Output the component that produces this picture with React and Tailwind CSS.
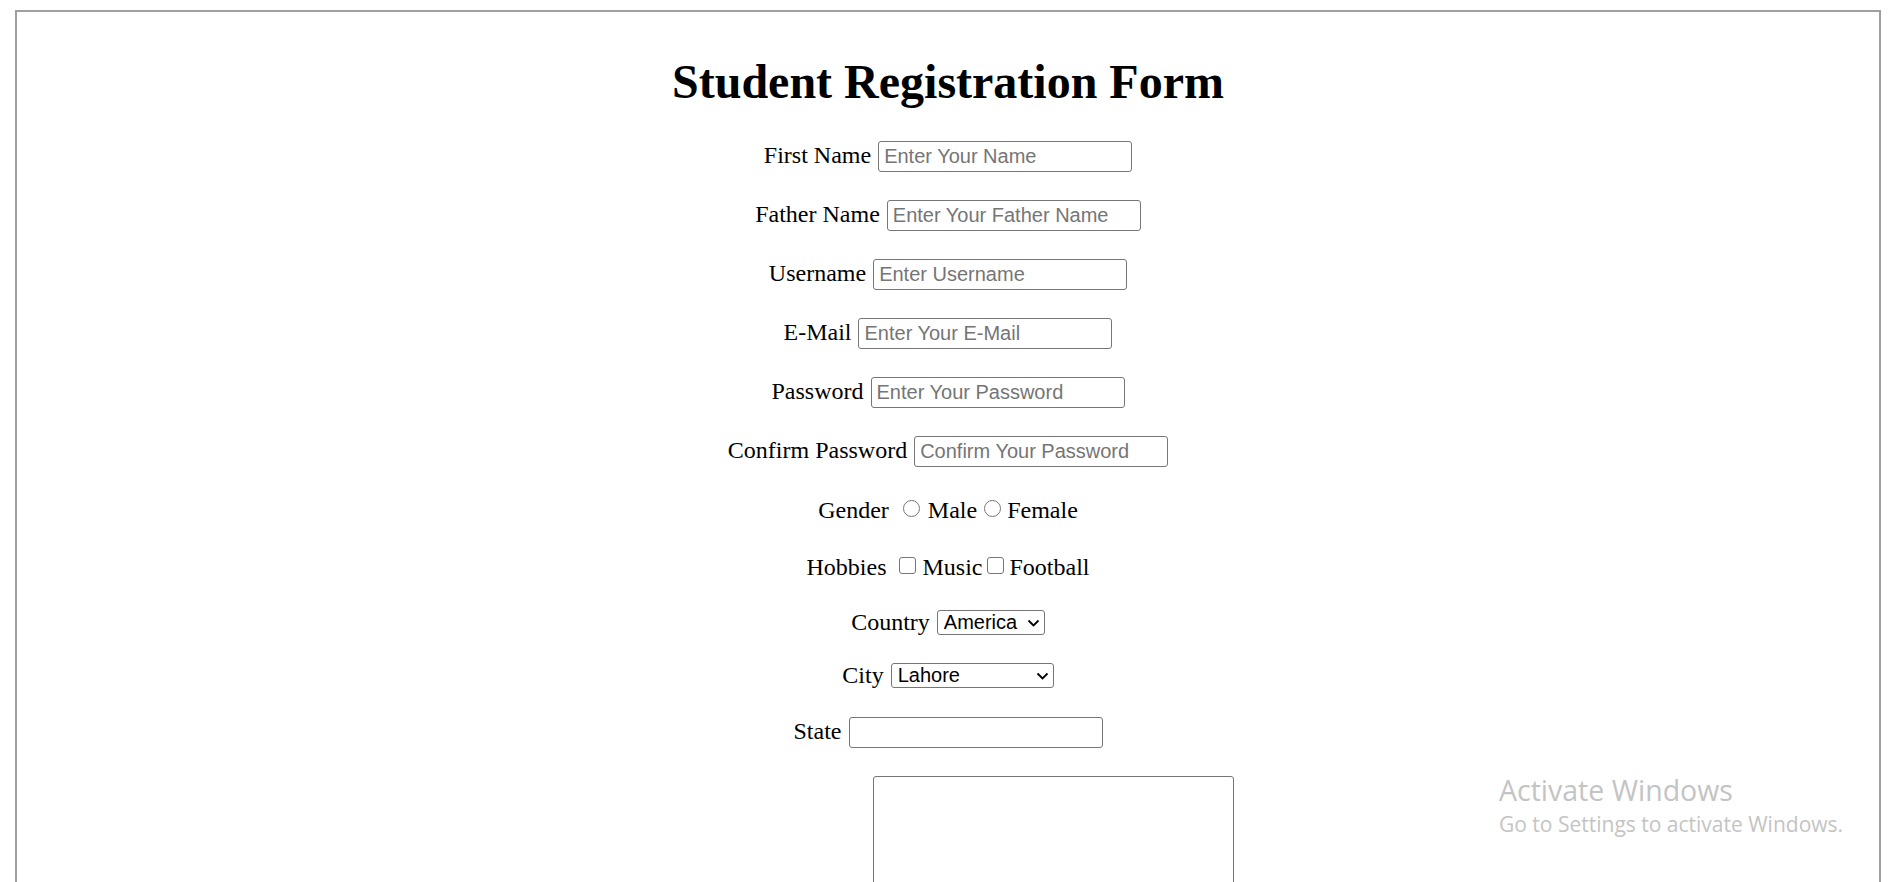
const serif = "font-['Liberation_Serif','Times_New_Roman',serif]";
const sans = "font-['Liberation_Sans',Arial,sans-serif]";

function Label({ children, className = "" }) {
  return (
    <span className={`${serif} text-[24px] leading-[28px] text-black whitespace-nowrap ${className}`}>
      {children}
    </span>
  );
}

function TextRow({ label, placeholder, type = "text", className = "" }) {
  return (
    <div className={`flex items-start justify-center gap-[7px] ${className}`}>
      <Label>{label}</Label>
      <input
        type={type}
        placeholder={placeholder}
        className={`${sans} w-[254px] h-[31px] px-[5px] py-0 text-[20px] text-black bg-white border border-[#767676] rounded-[3px] outline-none placeholder:text-[#757575]`}
      />
    </div>
  );
}

function Chevron() {
  return (
    <svg
      width="13"
      height="8"
      viewBox="0 0 13 8"
      className="absolute right-[5px] top-[9px] pointer-events-none"
    >
      <path d="M1.5 1.5 L6.5 6.5 L11.5 1.5" fill="none" stroke="#000" strokeWidth="1.8" />
    </svg>
  );
}

function SelectBox({ options, width }) {
  return (
    <div className={`relative mt-[2px] ${width}`}>
      <select
        className={`${sans} appearance-none w-full h-[25px] pl-[6px] pr-[20px] py-0 text-[20px] leading-[23px] text-black bg-white border border-[#767676] rounded-[3px] outline-none`}
      >
        {options.map((o) => (
          <option key={o}>{o}</option>
        ))}
      </select>
      <Chevron />
    </div>
  );
}

const radioCls =
  "appearance-none shrink-0 w-[17px] h-[17px] mt-[4px] rounded-full border border-[#767676] bg-white";
const checkCls =
  "appearance-none shrink-0 w-[17px] h-[17px] mt-[4px] rounded-[3px] border border-[#767676] bg-white";

export default function App() {
  return (
    <div className="relative h-[882px] overflow-hidden bg-white pt-[10px]">
      <div className="ml-[15px] mr-[17px] min-h-[1000px] border-2 border-[#a0a0a0]">
        <h1 className={`${serif} mt-[42px] text-center text-[48px] leading-[56px] font-bold text-black`}>
          Student Registration Form
        </h1>

        <form onSubmit={(e) => e.preventDefault()}>
          <TextRow className="mt-[31px]" label="First Name" placeholder="Enter Your Name" />
          <TextRow className="mt-[28px]" label="Father Name" placeholder="Enter Your Father Name" />
          <TextRow className="mt-[28px]" label="Username" placeholder="Enter Username" />
          <TextRow className="mt-[28px]" label="E-Mail" type="email" placeholder="Enter Your E-Mail" />
          <TextRow className="mt-[28px]" label="Password" type="password" placeholder="Enter Your Password" />
          <TextRow
            className="mt-[28px]"
            label="Confirm Password"
            type="password"
            placeholder="Confirm Your Password"
          />

          {/* gender */}
          <div className="mt-[29px] flex items-start justify-center">
            <Label>Gender</Label>
            <input type="radio" name="gender" className={`${radioCls} ml-[14px]`} />
            <Label className="ml-[8px]">Male</Label>
            <input type="radio" name="gender" className={`${radioCls} ml-[7px]`} />
            <Label className="ml-[6px]">Female</Label>
          </div>

          {/* hobbies */}
          <div className="mt-[29px] flex items-start justify-center">
            <Label>Hobbies</Label>
            <input type="checkbox" className={`${checkCls} ml-[13px]`} />
            <Label className="ml-[6px]">Music</Label>
            <input type="checkbox" className={`${checkCls} ml-[5px]`} />
            <Label className="ml-[5px]">Football</Label>
          </div>

          <div className="mt-[27px] flex items-start justify-center gap-[7px]">
            <Label>Country</Label>
            <SelectBox width="w-[108px]" options={["America", "Pakistan", "China"]} />
          </div>

          <div className="mt-[25px] flex items-start justify-center gap-[7px]">
            <Label>City</Label>
            <SelectBox width="w-[163px]" options={["Lahore", "Karachi", "Islamabad"]} />
          </div>

          <TextRow className="mt-[28px]" label="State" placeholder="" />

          {/* address: label sits below the fold, spacer keeps the box where it is */}
          <div className="mt-[28px] flex items-end justify-center gap-[7px]">
            <div className="w-[203px]" />
            <textarea className="w-[361px] h-[150px] resize-none bg-white border border-[#767676] rounded-[3px] outline-none" />
          </div>
        </form>
      </div>

      <div className="absolute left-[1499px] top-[773px] pointer-events-none font-['Open_Sans','Noto_Sans',sans-serif] text-[#c4c4c4]">
        <div className="text-[28.5px] leading-[34px]">Activate Windows</div>
        <div className="mt-[4px] text-[21px] leading-[26px]">Go to Settings to activate Windows.</div>
      </div>
    </div>
  );
}
